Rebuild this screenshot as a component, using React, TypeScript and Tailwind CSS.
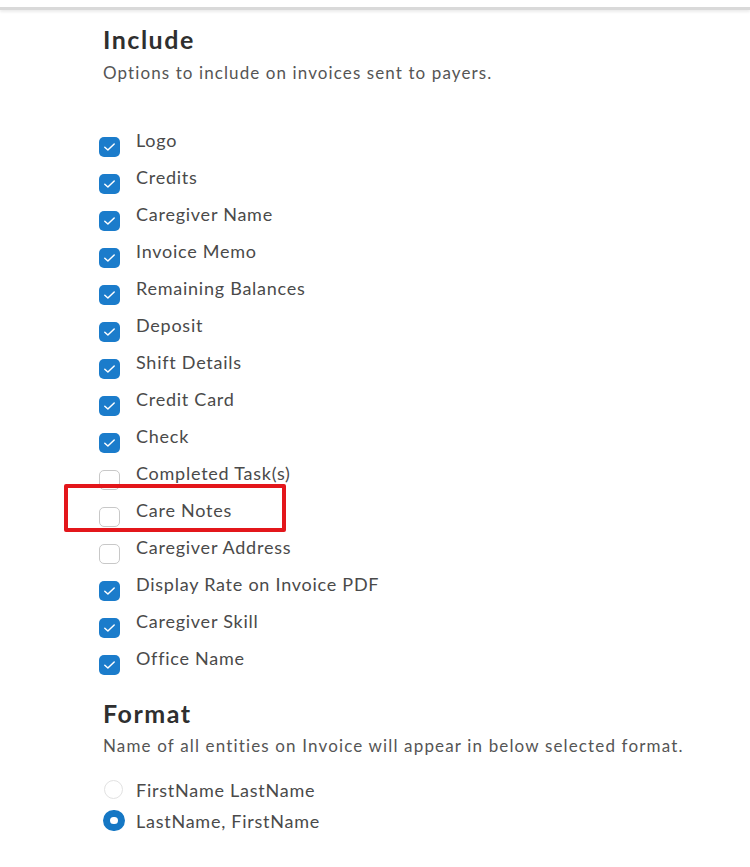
import React from "react";

interface OptionItem {
  label: string;
  checked: boolean;
  highlight?: boolean;
}

const options: OptionItem[] = [
  { label: "Logo", checked: true },
  { label: "Credits", checked: true },
  { label: "Caregiver Name", checked: true },
  { label: "Invoice Memo", checked: true },
  { label: "Remaining Balances", checked: true },
  { label: "Deposit", checked: true },
  { label: "Shift Details", checked: true },
  { label: "Credit Card", checked: true },
  { label: "Check", checked: true },
  { label: "Completed Task(s)", checked: false },
  { label: "Care Notes", checked: false, highlight: true },
  { label: "Caregiver Address", checked: false },
  { label: "Display Rate on Invoice PDF", checked: true },
  { label: "Caregiver Skill", checked: true },
  { label: "Office Name", checked: true },
];

const CheckBox: React.FC<{ checked: boolean }> = ({ checked }) =>
  checked ? (
    <span className="w-[21px] h-[20px] rounded-[5px] bg-[#1b7ccb] flex items-center justify-center flex-shrink-0">
      <svg width="13" height="10" viewBox="0 0 13 10" fill="none">
        <path d="M1.8 5.3 L4.9 8 L11.2 2" stroke="white" strokeWidth="1.5" strokeLinecap="round" strokeLinejoin="round" />
      </svg>
    </span>
  ) : (
    <span className="block w-[21px] h-[20px] rounded-[5px] border border-[#c8c8c8] bg-white flex-shrink-0" />
  );

const CheckRow: React.FC<OptionItem> = ({ label, checked, highlight }) => (
  <div className="relative flex items-start h-[37px]">
    <div className="mt-[8px]">
      <CheckBox checked={checked} />
    </div>
    <span className="ml-[16px] text-[18px] leading-[22px] tracking-[0.75px] text-[#4a4a4a]">{label}</span>
    {highlight && (
      <div className="absolute left-[-35px] top-[-15px] w-[222px] h-[48px] border-[4px] border-[#e3161b] rounded-[2px]" />
    )}
  </div>
);

const Radio: React.FC<{ checked: boolean; label: string }> = ({ checked, label }) => (
  <div className="flex items-center h-[31px]">
    {checked ? (
      <span className="block w-[22px] h-[21px] rounded-full border-[7px] border-[#1577c4] bg-white flex-shrink-0" />
    ) : (
      <span className="block w-[19px] h-[19px] ml-[1px] rounded-full border border-[#e2e2e2] bg-white flex-shrink-0" />
    )}
    <span className={`${checked ? "ml-[11px]" : "ml-[13px]"} text-[18px] leading-[22px] tracking-[0.75px] text-[#4a4a4a]`}>
      {label}
    </span>
  </div>
);

export default function App() {
  return (
    <div className="w-[750px] h-[867px] bg-white overflow-hidden" style={{ fontFamily: "Lato, 'Open Sans', sans-serif" }}>
      <div className="h-[10px] bg-white border-b-[3px] border-[#d9d9d9] shadow-[0_2px_3px_rgba(0,0,0,0.08)]" />
      <div className="pl-[103px] pt-[14px]">
        <h2 className="text-[25px] leading-[30px] font-bold tracking-[1.5px] text-[#2f2f2f]">Include</h2>
        <p className="mt-[9px] text-[17px] leading-[20px] tracking-[1.1px] text-[#555]">
          Options to include on invoices sent to payers.
        </p>
        <div className="mt-[46px] -ml-[4px]">
          {options.map((o) => (
            <CheckRow key={o.label} {...o} />
          ))}
        </div>
        <h2 className="mt-[14px] text-[25px] leading-[30px] font-bold tracking-[1.5px] text-[#2f2f2f]">Format</h2>
        <p className="mt-[8px] text-[17px] leading-[20px] tracking-[1.15px] text-[#555]">
          Name of all entities on Invoice will appear in below selected format.
        </p>
        <div className="mt-[18px]">
          <Radio checked={false} label="FirstName LastName" />
          <Radio checked={true} label="LastName, FirstName" />
        </div>
      </div>
    </div>
  );
}
